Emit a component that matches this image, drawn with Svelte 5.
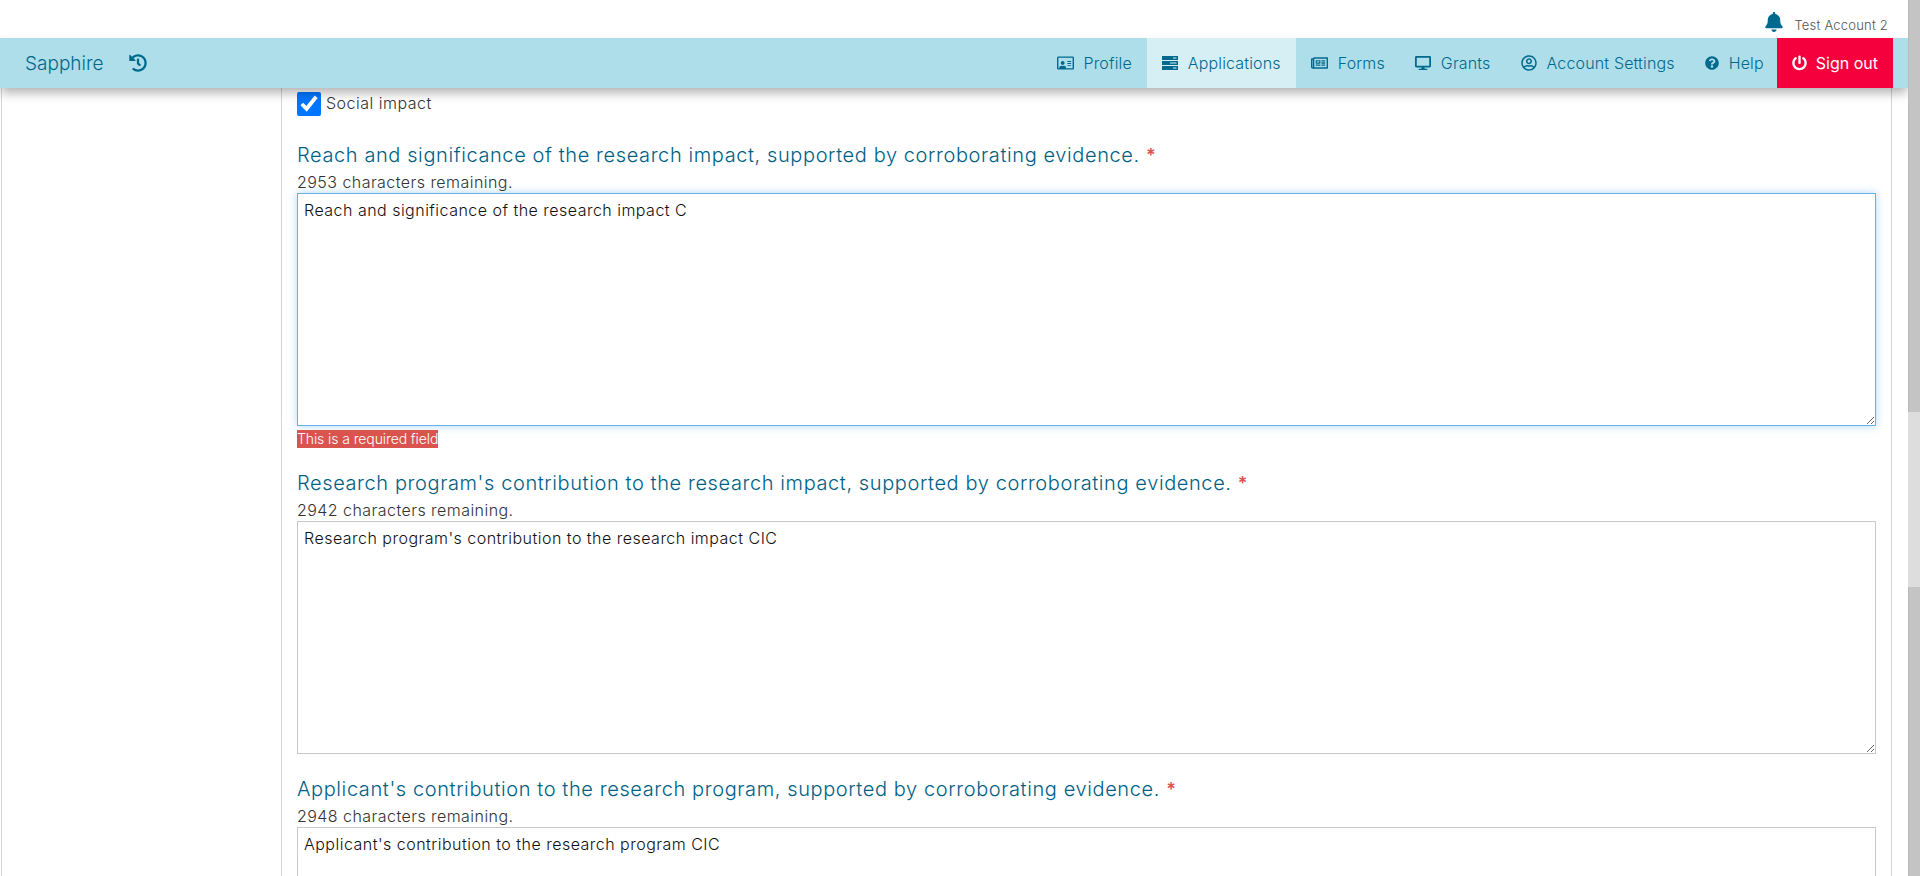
<script lang="ts">
  const paths: Record<string, [string, string]> = {
    bell: ['0 0 448 512', 'M224 512c35.32 0 63.97-28.65 63.97-64H160.03c0 35.35 28.65 64 63.97 64zm215.39-149.71c-19.32-20.76-55.47-51.99-55.47-154.29 0-77.7-54.48-139.9-127.94-155.16V32c0-17.67-14.32-32-31.98-32s-31.98 14.33-31.98 32v20.84C118.56 68.1 64.08 130.3 64.08 208c0 102.3-36.15 133.53-55.47 154.29-6 6.45-8.66 14.16-8.61 21.71.11 16.4 12.98 32 32.1 32h383.8c19.12 0 32-15.6 32.1-32 .05-7.55-2.61-15.27-8.61-21.71z'],
    history: ['0 0 512 512', 'M504 255.531c.253 136.64-111.18 248.372-247.82 248.468-59.015.042-113.223-20.53-155.822-54.911-11.077-8.94-11.905-25.541-1.839-35.607l11.267-11.267c8.609-8.609 22.353-9.551 31.891-1.984C173.062 425.135 212.781 440 256 440c101.705 0 184-82.311 184-184 0-101.705-82.311-184-184-184-48.814 0-93.149 18.969-126.068 49.932l50.754 50.754c10.08 10.08 2.941 27.314-11.313 27.314H24c-8.837 0-16-7.163-16-16V38.627c0-14.254 17.234-21.393 27.314-11.314l49.372 49.372C129.209 34.136 189.552 8 256 8c136.81 0 247.747 110.78 248 247.531zm-180.912 78.784l9.823-12.63c8.138-10.463 6.253-25.542-4.21-33.679L288 256.349V152c0-13.255-10.745-24-24-24h-16c-13.255 0-24 10.745-24 24v135.651l65.409 50.874c10.463 8.137 25.541 6.253 33.679-4.21z'],
    profile: ['0 0 576 512', 'M528 32H48C21.5 32 0 53.5 0 80v352c0 26.5 21.5 48 48 48h480c26.5 0 48-21.5 48-48V80c0-26.5-21.5-48-48-48zm0 400H303.2c.9-4.5.8 3.6.8-22.4 0-31.8-30.1-57.6-67.2-57.6-10.8 0-18.7 8-44.8 8-26.9 0-33.4-8-44.8-8-37.1 0-67.2 25.8-67.2 57.6 0 26-.2 17.9.8 22.4H48V80h480v352zm-168-80h112c4.4 0 8-3.6 8-8v-16c0-4.4-3.6-8-8-8H360c-4.4 0-8 3.6-8 8v16c0 4.4 3.6 8 8 8zm0-64h112c4.4 0 8-3.6 8-8v-16c0-4.4-3.6-8-8-8H360c-4.4 0-8 3.6-8 8v16c0 4.4 3.6 8 8 8zm0-64h112c4.4 0 8-3.6 8-8v-16c0-4.4-3.6-8-8-8H360c-4.4 0-8 3.6-8 8v16c0 4.4 3.6 8 8 8zm-168 96c35.3 0 64-28.7 64-64s-28.7-64-64-64-64 28.7-64 64 28.7 64 64 64z'],
    applications: ['0 0 16 14', 'M0 0h16v4H0zM11 1.5v1h3.5v-1zM0 5h16v4H0zM8 6.5v1h6.5v-1zM0 10h16v4H0zM11 11.5v1h3.5v-1z'],
    forms: ['0 0 576 512', 'M552 64H112c-20.858 0-38.643 13.377-45.248 32H24c-13.255 0-24 10.745-24 24v272c0 30.928 25.072 56 56 56h496c13.255 0 24-10.745 24-24V88c0-13.255-10.745-24-24-24zM48 392V144h16v248c0 4.411-3.589 8-8 8s-8-3.589-8-8zm480 8H111.422c.374-2.614.578-5.283.578-8V112h416v288zM172 280h136c6.627 0 12-5.373 12-12v-96c0-6.627-5.373-12-12-12H172c-6.627 0-12 5.373-12 12v96c0 6.627 5.373 12 12 12zm28-80h80v40h-80v-40zm-40 140v-24c0-6.627 5.373-12 12-12h136c6.627 0 12 5.373 12 12v24c0 6.627-5.373 12-12 12H172c-6.627 0-12-5.373-12-12zm192 0v-24c0-6.627 5.373-12 12-12h104c6.627 0 12 5.373 12 12v24c0 6.627-5.373 12-12 12H364c-6.627 0-12-5.373-12-12zm0-144v-24c0-6.627 5.373-12 12-12h104c6.627 0 12 5.373 12 12v24c0 6.627-5.373 12-12 12H364c-6.627 0-12-5.373-12-12zm0 72v-24c0-6.627 5.373-12 12-12h104c6.627 0 12 5.373 12 12v24c0 6.627-5.373 12-12 12H364c-6.627 0-12-5.373-12-12z'],
    grants: ['0 0 576 512', 'M528 0H48C21.5 0 0 21.5 0 48v320c0 26.5 21.5 48 48 48h192l-16 48h-72c-13.3 0-24 10.7-24 24s10.7 24 24 24h272c13.3 0 24-10.7 24-24s-10.7-24-24-24h-72l-16-48h192c26.5 0 48-21.5 48-48V48c0-26.5-21.5-48-48-48zm-16 352H64V64h448v288z'],
    account: ['0 0 496 512', 'M248 104c-53 0-96 43-96 96s43 96 96 96 96-43 96-96-43-96-96-96zm0 144c-26.5 0-48-21.5-48-48s21.5-48 48-48 48 21.5 48 48-21.5 48-48 48zm0-240C111 8 0 119 0 256s111 248 248 248 248-111 248-248S385 8 248 8zm0 448c-49.7 0-95.1-18.3-130.1-48.4 14.9-23 40.4-38.6 69.6-39.5 20.8 6.4 40.6 9.6 60.5 9.6s39.7-3.1 60.5-9.6c29.2 1 54.7 16.5 69.6 39.5-35 30.1-80.4 48.4-130.1 48.4zm162.7-84.1c-24.4-31.4-62.1-51.9-105.1-51.9-10.2 0-26 9.6-57.6 9.6-31.5 0-47.4-9.6-57.6-9.6-42.9 0-80.6 20.5-105.1 51.9C61.9 339.2 48 299.2 48 256c0-110.3 89.7-200 200-200s200 89.7 200 200c0 43.2-13.9 83.2-37.3 115.9z'],
    help: ['0 0 512 512', 'M504 256c0 136.997-111.043 248-248 248S8 392.997 8 256C8 119.083 119.043 8 256 8s248 111.083 248 248zM262.655 90c-54.497 0-89.255 22.957-116.549 63.758-3.536 5.286-2.353 12.415 2.715 16.258l34.699 26.31c5.205 3.947 12.621 3.008 16.665-2.122 17.864-22.658 30.113-35.797 57.303-35.797 20.429 0 45.698 13.148 45.698 32.958 0 14.976-12.363 22.667-32.534 33.976C247.128 238.528 216 254.941 216 296v4c0 6.627 5.373 12 12 12h56c6.627 0 12-5.373 12-12v-1.333c0-28.462 83.186-29.647 83.186-106.667 0-58.002-60.165-102-116.531-102zM256 338c-25.365 0-46 20.635-46 46 0 25.364 20.635 46 46 46s46-20.636 46-46c0-25.365-20.635-46-46-46z'],
    power: ['0 0 512 512', 'M400 54.1c63 45 104 118.6 104 201.9 0 136.8-110.8 247.7-247.5 248C120 504.3 8.2 393 8 256.4 7.9 173.1 48.9 99.3 111.8 54.2c11.7-8.3 28-4.8 35 7.7L162.6 90c5.9 10.5 3.1 23.8-6.6 31-41.5 30.8-68 79.6-68 134.9-.1 92.3 74.5 168.1 168 168.1 91.6 0 168.6-74.2 168-169.1-.3-51.8-24.7-101.8-68.1-134-9.7-7.2-12.4-20.5-6.5-30.9l15.8-28.1c7-12.4 23.2-16.1 34.8-7.8zM296 264V24c0-13.3-10.7-24-24-24h-32c-13.3 0-24 10.7-24 24v240c0 13.3 10.7 24 24 24h32c13.3 0 24-10.7 24-24z'],
  };

  const nav = [
    { id: 'profile', label: 'Profile', w: 17 },
    { id: 'applications', label: 'Applications', w: 16, active: true },
    { id: 'forms', label: 'Forms', w: 17 },
    { id: 'grants', label: 'Grants', w: 16 },
    { id: 'account', label: 'Account Settings', w: 16 },
    { id: 'help', label: 'Help', w: 14 },
  ];

  const fields = [
    {
      label: 'Reach and significance of the research impact, supported by corroborating evidence.',
      remaining: 2953,
      value: 'Reach and significance of the research impact C',
      focused: true,
    },
    {
      label: "Research program's contribution to the research impact, supported by corroborating evidence.",
      remaining: 2942,
      value: "Research program's contribution to the research impact CIC",
    },
    {
      label: "Applicant's contribution to the research program, supported by corroborating evidence.",
      remaining: 2948,
      value: "Applicant's contribution to the research program CIC",
    },
  ];
</script>

{#snippet icon(name: string, w: number)}
  <svg class="icon" width={w} height="16" viewBox={paths[name][0]} fill="currentColor" aria-hidden="true">
    <path d={paths[name][1]} />
  </svg>
{/snippet}

<div class="page">
  <div class="main">
    <div class="topline">
      <span class="bell">{@render icon('bell', 18)}</span>
      <span class="account">Test Account 2</span>
    </div>

    <header class="bar">
      <a class="brand" href="#top">Sapphire</a>
      <span class="hist">{@render icon('history', 18)}</span>
      <nav>
        {#each nav as item (item.id)}
          <a class="item" class:active={item.active} href="#top">
            {@render icon(item.id, item.w)}
            <span>{item.label}</span>
          </a>
        {/each}
        <a class="item signout" href="#top">
          {@render icon('power', 15)}
          <span>Sign out</span>
        </a>
      </nav>
    </header>

    <div class="columns">
      <aside class="side"></aside>
      <main class="form">
        <label class="check">
          <input type="checkbox" checked />
          <span>Social impact</span>
        </label>

        {#each fields as f, i (f.remaining)}
          <section class="field">
            <h4>{f.label} <span class="req">*</span></h4>
            <p class="count">{f.remaining} characters remaining.</p>
            <textarea class:focused={f.focused} value={f.value}></textarea>
            {#if i === 0}
              <div class="err"><span>This is a required field</span></div>
            {/if}
          </section>
        {/each}
      </main>
    </div>
  </div>

  <div class="scrollbar">
    <div class="seg"></div>
    <div class="thumb"></div>
    <div class="seg rest"></div>
  </div>
</div>

<style>
  :global(body) {
    margin: 0;
    overflow: hidden;
    background: #fff;
  }
  .page {
    display: flex;
    height: 876px;
    overflow: hidden;
    font-family: Inter, 'Liberation Sans', sans-serif;
    color: #444;
  }
  .main {
    width: 1908px;
    flex: 0 0 auto;
    overflow: hidden;
  }
  .topline {
    height: 38px;
    display: flex;
    align-items: center;
    justify-content: flex-end;
    padding: 12px 20px 0 0;
    box-sizing: border-box;
  }
  .bell {
    color: #006a8e;
    display: flex;
    margin: -6px 11px 0 0;
  }
  .bell :global(svg) {
    height: 20px;
  }
  .account {
    font-size: 13px;
    letter-spacing: 0.2px;
    color: #555;
    font-weight: 300;
  }
  .bar {
    height: 50px;
    background: #addeea;
    display: flex;
    align-items: center;
    padding: 0 15px 0 25px;
    position: relative;
    z-index: 2;
    box-shadow: 0 6px 10px -1px rgba(0, 0, 0, 0.3);
    color: #006a8e;
  }
  .brand {
    font-size: 19px;
    font-weight: 300;
    color: #006a8e;
    text-decoration: none;
  }
  .hist {
    display: flex;
    margin-left: 26px;
  }
  .hist :global(svg) {
    height: 18px;
  }
  nav {
    margin-left: auto;
    display: flex;
    height: 100%;
  }
  .item {
    display: flex;
    align-items: center;
    gap: 10px;
    padding: 0 15px;
    color: #006a8e;
    font-size: 16px;
    font-weight: 300;
    letter-spacing: 0.15px;
    text-decoration: none;
  }
  .item.active {
    background: #d5eff5;
  }
  .item.signout {
    background: #f5003d;
    color: #fff;
    font-weight: 400;
    letter-spacing: 0;
    gap: 9px;
    margin-left: -2px;
  }
  .columns {
    display: flex;
    height: 788px;
    overflow: hidden;
  }
  .side {
    width: 280px;
    margin-left: 1px;
    border-left: 1px solid #d4d4d4;
    box-sizing: border-box;
  }
  .form {
    width: 1611px;
    box-sizing: border-box;
    border-left: 1px solid #d4d4d4;
    border-right: 1px solid #d4d4d4;
    padding: 4px 15px 0;
  }
  .check {
    display: flex;
    align-items: center;
    gap: 5px;
    font-size: 16px;
    font-weight: 300;
    letter-spacing: 0.5px;
    height: 24px;
    color: #333;
  }
  .check input {
    width: 24px;
    height: 24px;
    margin: 0;
  }
  .check span {
    margin-top: -2px;
  }
  .field {
    margin-top: 22px;
  }
  .check + .field {
    margin-top: 26px;
  }
  h4 {
    margin: 0;
    font-size: 20px;
    line-height: 27px;
    font-weight: 300;
    letter-spacing: 0.6px;
    color: #005f85;
  }
  .req {
    color: #d9534f;
    font-weight: 600;
    font-size: 18px;
  }
  .count {
    margin: 2px 0 0;
    font-size: 16px;
    line-height: 22px;
    font-weight: 300;
    color: #333;
    letter-spacing: 0.45px;
  }
  textarea {
    display: block;
    width: 100%;
    height: 233px;
    box-sizing: border-box;
    margin: 0;
    padding: 6px;
    border: 1px solid #c8c8c8;
    border-radius: 0;
    outline: none;
    font-family: inherit;
    font-size: 16px;
    line-height: 21px;
    font-weight: 300;
    letter-spacing: 0.48px;
    color: #111;
    background: #fff;
  }
  textarea.focused {
    border-color: #66afe9;
    box-shadow: 0 0 8px rgba(102, 175, 233, 0.5);
  }
  .err {
    display: flex;
    margin: 4px 0 1px;
    height: 18px;
  }
  .err span {
    background: #d9534f;
    color: #fff;
    font-size: 14px;
    line-height: 18px;
    font-weight: 300;
    letter-spacing: -0.1px;
    white-space: nowrap;
  }
  .scrollbar {
    width: 12px;
    flex: 0 0 auto;
    display: flex;
    flex-direction: column;
    background: #ddd;
  }
  .seg {
    height: 412px;
    background: #c4c4c4;
    border-left: 1px solid #bbb;
    box-sizing: border-box;
  }
  .thumb {
    height: 175px;
    background: #ddd;
  }
  .rest {
    flex: 1;
  }
</style>
